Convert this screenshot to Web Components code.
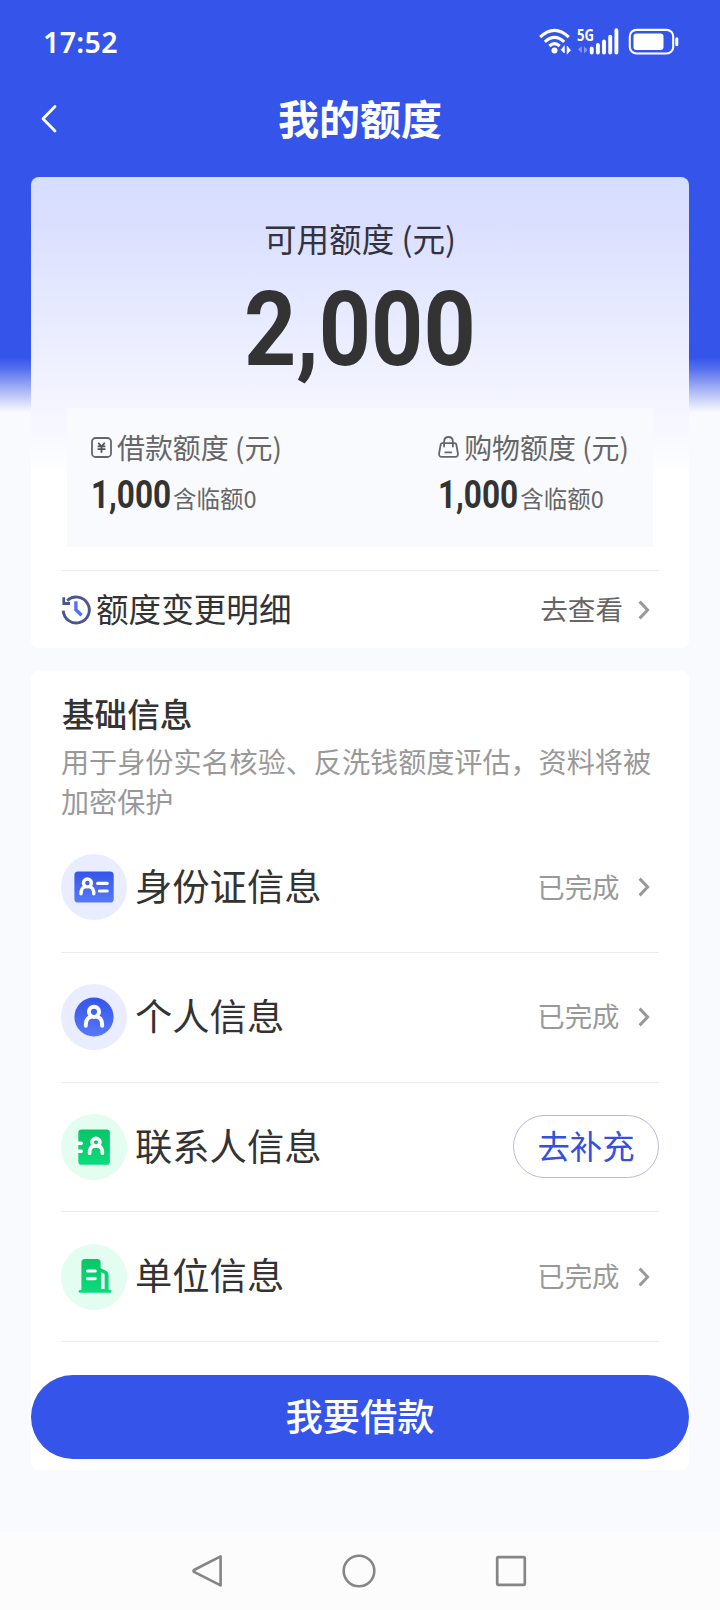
<!DOCTYPE html>
<html lang="zh-CN">
<head>
<meta charset="utf-8">
<title>我的额度</title>
<style>
  body { margin: 0; width: 720px; height: 1610px; overflow: hidden; background: #f9fafe; font-family: "Noto Sans CJK SC", sans-serif; color: #333; }
</style>
</head>
<body>
<quota-page></quota-page>
<script>
const define = (name, html) => {
  const tpl = document.createElement('template');
  tpl.innerHTML = html;
  customElements.define(name, class extends HTMLElement {
    constructor() {
      super();
      this.attachShadow({ mode: 'open' }).append(tpl.content.cloneNode(true));
    }
  });
};

/* Icons */
const person = (x, y, s, w) => `<g transform="translate(${x} ${y}) scale(${s})" fill="none" stroke="#fff" stroke-width="${w}" stroke-linecap="round"><circle cx="0" cy="-4.6" r="4.7"/><path d="M-7.6 8.4C-7.6 3.6-5.6.6-3 .1M7.6 8.4C7.6 3.6 5.6.6 3 .1"/></g>`;
const blue = `<defs><linearGradient id="g" x1="0" y1="0" x2="0" y2="1"><stop offset="0" stop-color="#3455ea"/><stop offset="1" stop-color="#5679fa"/></linearGradient></defs>`;
const green = `<defs><linearGradient id="g" x1="0" y1="0" x2="0" y2="1"><stop offset="0" stop-color="#08c566"/><stop offset="1" stop-color="#0cdc7c"/></linearGradient></defs>`;
const ICONS = {
  back: [16, 30, `<path d="M14 2.5 2 14.7 14 27" fill="none" stroke="#fff" stroke-width="2.8" stroke-linecap="round" stroke-linejoin="round"/>`],
  chevron: [12, 20, `<path d="M1.6 1.6 9.6 10 1.6 18.4" fill="none" stroke="#999" stroke-width="3"/>`],
  yen: [21, 21, `<rect x="1" y="1" width="19" height="19" rx="3.6" fill="none" stroke="#666" stroke-width="1.8"/><path d="M7.2 5.9 10.5 9.3 13.8 5.9M6.6 9.4H14.4M6.6 12.2H14.4M10.5 9V15.8" fill="none" stroke="#555" stroke-width="1.8"/>`],
  bag: [21, 22, `<path d="M4.3 7.2H16.7Q18 7.2 18.3 8.5L19.9 17.4Q20.2 20.9 17.2 20.9H3.8Q.8 20.9 1.1 17.4L2.7 8.5Q3 7.2 4.3 7.2ZM6.1 10.6V5.6Q6.3 1 10.5 1Q14.7 1 14.9 5.6V10.6M7.3 16.4H13.3" fill="none" stroke="#666" stroke-width="1.8" stroke-linecap="round"/>`],
  history: [30, 30, `<path d="M2.3 15.6A13 13 0 1 0 6.2 5.7" fill="none" stroke="#4a568f" stroke-width="2.9"/><path d="M1.4 2.2H4.1V7H9V9.9H1.4Z" fill="#4a568f"/><path d="M14.9 6.2V14.8L20.6 20.3" fill="none" stroke="#5672f3" stroke-width="3.4"/>`],
  idcard: [66, 66, blue + `<circle cx="33" cy="33" r="33" fill="#e9edff"/><rect x="13.4" y="17.5" width="39.3" height="31" rx="3.6" fill="url(#g)"/>${person(26.4, 32.8, .84, 4.1)}<path d="M36.6 29.4H46.2M38.4 37H46.2" stroke="#fff" stroke-width="3.2" stroke-linecap="round"/>`],
  profile: [66, 66, blue + `<circle cx="33" cy="33" r="33" fill="#e9edff"/><circle cx="33" cy="33" r="19.6" fill="url(#g)"/>${person(33, 32.8, 1.08, 3.7)}`],
  contacts: [66, 66, green + `<circle cx="33" cy="33" r="33" fill="#e3fdf0"/><rect x="17.3" y="15.6" width="31.6" height="35.2" rx="3.4" fill="url(#g)"/>${person(35, 32.1, .84, 4.4)}<path d="M15.8 29.2H20.3M15.8 37.2H20.3" stroke="#fff" stroke-width="3.4" stroke-linecap="round"/>`],
  company: [66, 66, green + `<circle cx="33" cy="33" r="33" fill="#e3fdf0"/><path d="M20.4 46V18.5Q20.4 15 23.9 15H36.3Q39.6 15 39.6 18.5V24.2L45 26.8Q47.6 28.1 47.6 31V46H49.3Q50.6 46 50.6 47.4T49.3 48.8H19Q17.6 48.8 17.6 47.4T19 46Z" fill="url(#g)"/><path d="M26.5 27H34.2M26.5 34.6H34.2" stroke="#fff" stroke-width="3.1" stroke-linecap="round"/><path d="M40.2 28.3 43.6 30V45H40.2Z" fill="#fff"/>`],
  wifi: [34, 28, `<g fill="none" stroke="#fff" stroke-width="3.1"><path d="M1.2 9.2Q15.5 -4.3 29.8 9.2M5.8 13.8Q15.5 5 25.2 13.8M10.3 18Q15.5 13.4 20.7 18"/></g><circle cx="15.5" cy="22.4" r="3" fill="#fff"/><path d="M25.3 17.5V25L22 21.6M28.2 26.2V18.2L31.6 22.4" fill="#fff" stroke="#fff" stroke-width=".8"/>`],
  signal: [42, 28, `<text x="0" y="13" font-family="Noto Sans" font-weight="700" font-size="15.5" textLength="17" lengthAdjust="spacingAndGlyphs" fill="#fff">5G</text><path d="M4.8 18V25L1 21.6M7 25.5V18.2L10.6 22" fill="#8799f5"/><path d="M14.7 20.5V24.5M20.9 17V24.5M27 13.5V24.5M33.2 8.6V24.5M39.4 2.2V24.5" stroke="#fff" stroke-width="3.9" stroke-linecap="round"/>`],
  battery: [52, 28, `<rect x="1.8" y="1.9" width="43.4" height="23.6" rx="6.6" fill="none" stroke="#fff" stroke-width="2.1"/><rect x="5.5" y="5.6" width="30" height="16.3" rx="3" fill="#fff"/><rect x="47.3" y="9.2" width="3" height="9" rx="1.5" fill="#fff"/>`],
  'nav-back': [34, 36, `<path d="M29.6 3.4V32.4L3 18.8Q2 18 3 17Z" fill="none" stroke="#858585" stroke-width="2.6" stroke-linejoin="round"/>`],
  'nav-home': [36, 36, `<circle cx="18" cy="18" r="15.3" fill="none" stroke="#858585" stroke-width="2.6"/>`],
  'nav-recent': [36, 36, `<rect x="4.2" y="4.2" width="27.6" height="27.6" rx="1.2" fill="none" stroke="#858585" stroke-width="2.7"/>`],
};
customElements.define('app-icon', class extends HTMLElement {
  connectedCallback() {
    if (this.shadowRoot) return;
    const [w, h, body] = ICONS[this.getAttribute('name')];
    this.attachShadow({ mode: 'open' }).innerHTML =
      `<style>:host{display:block;flex:none;width:${w}px;height:${h}px}svg{display:block;overflow:visible}</style><svg width="${w}" height="${h}" viewBox="0 0 ${w} ${h}">${body}</svg>`;
  }
});

define('status-bar', `<style>
  :host { display: flex; align-items: center; height: 84px; padding: 0 40px 0 43px; box-sizing: border-box; color: #fff; }
  time { flex: 1; font: 600 28.6px/84px "Noto Sans", sans-serif; letter-spacing: .3px; }
  .icons { display: flex; }
  app-icon + app-icon { margin-left: 4px; }
  app-icon:last-child { margin-left: 9px; }
</style><time>17:52</time><div class="icons"><app-icon name="wifi"></app-icon><app-icon name="signal"></app-icon><app-icon name="battery"></app-icon></div>`);

define('title-bar', `<style>
  :host { display: grid; grid-template-columns: 1fr auto 1fr; align-items: center; height: 70px; padding: 0 41px; color: #fff; }
  h1 { margin: 0; font-size: 41px; line-height: 1; font-weight: 700; padding-bottom: .09em; }
</style><app-icon name="back"></app-icon><h1><slot></slot></h1><span></span>`);

define('quota-item', `<style>
  :host { display: block; color: #666; }
  .label { display: flex; align-items: center; gap: 5px; font-size: 27.95px; height: 40px; line-height: 36.5px; white-space: pre; }
  .value { display: flex; align-items: baseline; height: 46px; margin-top: 5px; line-height: 46px; font-size: 23.5px; }
  .num { width: 82px; }
  .num span { display: inline-block; transform: scaleX(.83); transform-origin: 0 50%; font-family: Roboto; font-weight: 700; font-size: 38px; color: #333; }
</style><div class="label"><slot name="icon"></slot><slot></slot></div><div class="value"><div class="num"><span>1,000</span></div><slot name="note"></slot></div>`);

define('quota-card', `<style>
  :host { display: block; box-sizing: border-box; height: 471px; margin: 23px 31px 0; padding: 43px 30px 0; border-radius: 8px; background: linear-gradient(#d6deff 0, #dadfff 45px, #e8ebff 140px, #f4f5ff 230px, #fafbff 272px, #fff 300px); }
  h2 { margin: 0; text-align: center; font-weight: 400; font-size: 32.6px; line-height: 36px; height: 40px; color: #32333f; }
  .total { height: 120px; text-align: center; font: 700 103px/139px Roboto, sans-serif; color: #333; }
  .total span { display: inline-block; transform: scaleX(.885); }
  .parts { display: flex; justify-content: space-between; box-sizing: border-box; height: 139px; margin: 28px 6px 0; padding: 19px 24px 0; background: #f9fafe; }
  .more { display: flex; align-items: center; margin-top: 23px; height: 78px; border-top: 1px solid #ececef; font-size: 32.6px; }
  .more b { flex: 1; font-weight: 400; margin-left: 5px; line-height: 1; padding-bottom: .09em; }
  .more i { font-style: normal; font-size: 27.6px; line-height: 1; padding-bottom: .1em; color: #666; margin-right: 15px; }
  .more app-icon:last-child { margin-right: 9px; }
</style>
<h2>可用额度 (元)</h2><div class="total"><span>2,000</span></div>
<div class="parts">
  <quota-item><app-icon slot="icon" name="yen"></app-icon>借款额度 (元)<span slot="note">含临额0</span></quota-item>
  <quota-item><app-icon slot="icon" name="bag"></app-icon>购物额度 (元)<span slot="note">含临额0</span></quota-item>
</div>
<div class="more"><app-icon name="history"></app-icon><b>额度变更明细</b><i>去查看</i><app-icon name="chevron"></app-icon></div>`);

define('info-row', `<style>
  :host { display: flex; align-items: center; box-sizing: border-box; height: 129.75px; border-bottom: 1px solid #ececef; }
  .label { flex: 1; margin-left: 8px; font-size: 37.3px; line-height: 1; padding-bottom: .08em; }
</style><slot name="icon"></slot><div class="label"><slot></slot></div><slot name="action"></slot>`);

define('done-state', `<style>
  :host { display: flex; align-items: center; color: #999; font-size: 27.4px; line-height: 1; padding-right: 9px; }
  span { padding-bottom: .08em; margin-right: 18.5px; }
</style><span><slot></slot></span><app-icon name="chevron"></app-icon>`);

define('outline-button', `<style>
  :host { display: block; }
  button { display: block; width: 146px; height: 63px; padding: 0 0 3px; border: 1px solid #b6b9da; border-radius: 32px; background: #fff; color: #3350e0; font: 400 32.4px/1 "Noto Sans CJK SC", sans-serif; }
</style><button><slot></slot></button>`);

define('primary-button', `<style>
  :host { display: block; }
  button { display: block; width: 100%; height: 84px; padding: 0 0 3px; border: 0; border-radius: 42px; background: #3454ea; color: #fff; font: 500 37.3px/1 "Noto Sans CJK SC", sans-serif; }
</style><button><slot></slot></button>`);

define('info-card', `<style>
  :host { display: block; box-sizing: border-box; height: 799px; margin: 23px 31px 0; padding: 24px 0 0; border-radius: 8px; background: #fff; }
  .body { margin: 0 30px; }
  h2 { margin: 0; font-weight: 500; font-size: 32.6px; line-height: 36px; height: 46px; text-indent: 1px; }
  p { margin: 0; height: 82px; font-size: 28.1px; line-height: 40px; color: #999; }
  primary-button { margin-top: 33px; }
</style>
<div class="body">
<h2>基础信息</h2>
<p>用于身份实名核验、反洗钱额度评估，资料将被加密保护</p>
<info-row><app-icon slot="icon" name="idcard"></app-icon>身份证信息<done-state slot="action">已完成</done-state></info-row>
<info-row><app-icon slot="icon" name="profile"></app-icon>个人信息<done-state slot="action">已完成</done-state></info-row>
<info-row><app-icon slot="icon" name="contacts"></app-icon>联系人信息<outline-button slot="action">去补充</outline-button></info-row>
<info-row><app-icon slot="icon" name="company"></app-icon>单位信息<done-state slot="action">已完成</done-state></info-row>
</div>
<primary-button>我要借款</primary-button>`);

define('system-nav', `<style>
  :host { display: flex; justify-content: center; align-items: center; gap: 116px; height: 78px; padding-left: 0; background: #fcfcfc; }
  app-icon:first-child { margin-right: 2px; }
</style><app-icon name="nav-back"></app-icon><app-icon name="nav-home"></app-icon><app-icon name="nav-recent"></app-icon>`);

define('quota-page', `<style>
  :host { display: flex; flex-direction: column; height: 1610px; background: linear-gradient(#3454ea 0, #3454ea 357px, #5570ee 369px, #a9b5f4 390px, #f9fafe 412px) no-repeat; }
  system-nav { margin-top: auto; }
</style><status-bar></status-bar><title-bar>我的额度</title-bar><quota-card></quota-card><info-card></info-card><system-nav></system-nav>`);
</script>
</body>
</html>
